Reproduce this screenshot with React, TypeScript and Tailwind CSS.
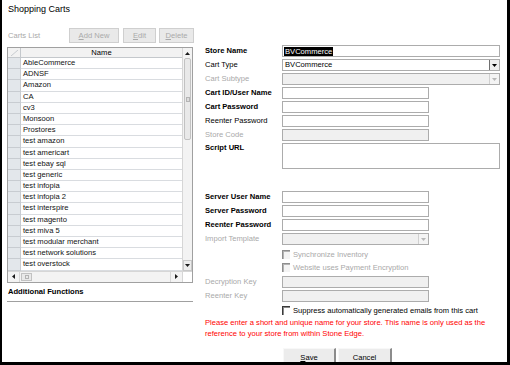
import React from 'react';

const carts = [
  'AbleCommerce',
  'ADNSF',
  'Amazon',
  'CA',
  'cv3',
  'Monsoon',
  'Prostores',
  'test amazon',
  'test americart',
  'test ebay sql',
  'test generic',
  'test infopia',
  'test infopia 2',
  'test interspire',
  'test magento',
  'test miva 5',
  'test modular merchant',
  'test network solutions',
  'test overstock',
];

const Label = ({ text, bold, disabled }: { text: string; bold?: boolean; disabled?: boolean }) => (
  <div
    className={`w-[77px] shrink-0 leading-[12px] ${bold ? 'font-bold' : ''} ${disabled ? 'text-[#a9a9a9]' : 'text-black'}`}
  >
    {text}
  </div>
);

const Input = ({ wide, disabled }: { wide?: boolean; disabled?: boolean }) => (
  <div
    className={`h-[12px] border border-[#acacac] ${wide ? 'w-[218px]' : 'w-[147px]'} ${disabled ? 'bg-[#f0f0f0]' : 'bg-white'}`}
  />
);

const Select = ({ wide, disabled, value }: { wide?: boolean; disabled?: boolean; value?: string }) => (
  <div
    className={`h-[12px] border border-[#acacac] flex items-stretch ${wide ? 'w-[218px]' : 'w-[147px]'} ${disabled ? 'bg-[#f0f0f0]' : 'bg-white'}`}
  >
    <div className="flex-1 pl-[2px] leading-[10px] text-black">{value}</div>
    <div
      className={`w-[10px] flex items-center justify-center border-l ${disabled ? 'border-[#d0d0d0] bg-[#f4f4f4]' : 'border-[#707070] bg-[#eeeeee]'}`}
    >
      <svg width="5" height="3" viewBox="0 0 5 3">
        <path d="M0 0h5L2.5 3z" fill={disabled ? '#b8b8b8' : '#000'} />
      </svg>
    </div>
  </div>
);

const Check = ({ text, disabled }: { text: string; disabled?: boolean }) => (
  <div className="h-[13px] flex items-center pl-[77px]">
    <div
      className={`w-[8px] h-[9px] border-t border-l ${disabled ? 'border-[#8e8e8e] bg-[#f4f4f4]' : 'border-[#3a3a3a] bg-white'}`}
    >
      <div
        className={`w-full h-full border-t border-l ${disabled ? 'border-[#b4b4b4]' : 'border-[#8a8a8a]'}`}
      />
    </div>
    <span className={`ml-[3px] leading-[12px] ${disabled ? 'text-[#a9a9a9]' : 'text-black'}`}>{text}</span>
  </div>
);

const ToolButton = ({ width, first, rest }: { width: string; first: string; rest: string }) => (
  <div
    className={`${width} h-[15px] bg-[#e9e9e9] border border-[#cfcfcf] flex items-center justify-center text-[#a9a9a9]`}
  >
    <span>
      <span className="underline">{first}</span>
      {rest}
    </span>
  </div>
);

const Arrow = ({ dir }: { dir: 'up' | 'down' | 'left' | 'right' }) => {
  const d = {
    up: 'M0 3h5L2.5 0z',
    down: 'M0 0h5L2.5 3z',
    left: 'M3 0v5L0 2.5z',
    right: 'M0 0v5L3 2.5z',
  }[dir];
  const vert = dir === 'up' || dir === 'down';
  return (
    <svg width={vert ? 5 : 3} height={vert ? 3 : 5} viewBox={vert ? '0 0 5 3' : '0 0 3 5'}>
      <path d={d} fill="#1a1a1a" />
    </svg>
  );
};

export default function App() {
  return (
    <div className="w-[510px] h-[365px] overflow-hidden bg-white border-l-2 border-r-[3px] border-b-[3px] border-black font-['Liberation_Sans',Arial,sans-serif] text-[7.6px] text-[#1a1a1a]">
      <div className="h-[20px] pl-[6px] pt-[2px] text-[9px] leading-[14px] text-black">Shopping Carts</div>

      <div className="flex pl-[5px]">
        {/* left: carts list */}
        <div className="w-[187px] shrink-0 flex flex-col">
          <div className="mt-[8px] h-[15px] flex items-center">
            <div className="w-[62px] pl-[1px] text-[#a9a9a9]">Carts List</div>
            <ToolButton width="w-[50px]" first="A" rest="dd New" />
            <div className="w-[4px]" />
            <ToolButton width="w-[33px]" first="E" rest="dit" />
            <div className="w-[3px]" />
            <ToolButton width="w-[35px]" first="D" rest="elete" />
          </div>

          <div className="mt-[4px] w-[186px] border border-[#a0a0a0] flex flex-col">
            <div className="flex h-[222.8px]">
              <div className="w-[174px] flex flex-col">
                <div className="h-[10px] flex border-b border-[#c4c8cc] bg-[#f2f2f2]">
                  <div className="w-[13px] border-r border-[#c4c8cc] relative">
                    <svg className="absolute left-[3px] top-[2px]" width="7" height="6" viewBox="0 0 7 6">
                      <path d="M0 6L7 0" stroke="#c8ccd0" strokeWidth="1" />
                    </svg>
                  </div>
                  <div className="flex-1 text-center leading-[9px] text-black">Name</div>
                </div>
                {carts.map((c) => (
                  <div key={c} className="h-[11.2px] flex">
                    <div className="w-[13px] bg-[#e3e7eb] border-b border-r border-[#c8ccd1]" />
                    <div className="flex-1 pl-[2px] border-b border-[#d9dce0] leading-[10px] whitespace-nowrap overflow-hidden text-[#111]">
                      {c}
                    </div>
                  </div>
                ))}
              </div>
              <div className="w-[10px] flex flex-col bg-[#f3f3f3] border-l border-[#d6d6d6]">
                <div className="h-[10px] flex items-center justify-center">
                  <Arrow dir="up" />
                </div>
                <div className="h-[82px] mx-[1px] border border-[#c2c2c2] rounded-[2px] bg-[#e9e9e9] flex items-center justify-center">
                  <div className="w-[4px] h-[5px] border border-[#b4b4b4] bg-[#dcdcdc]" />
                </div>
                <div className="mt-auto h-[11px] flex items-center justify-center border border-[#c8c8c8] bg-[#ececec]">
                  <Arrow dir="down" />
                </div>
              </div>
            </div>
            <div className="flex h-[11px] bg-[#f3f3f3] border-t border-[#d6d6d6]">
              <div className="w-[12px] flex items-center justify-center border-r border-[#d6d6d6]">
                <Arrow dir="left" />
              </div>
              <div className="w-[11px] my-[1px] ml-[1px] border border-[#c2c2c2] bg-[#e9e9e9] flex items-center justify-center">
                <div className="w-[4px] h-[4px] border border-[#b4b4b4]" />
              </div>
              <div className="flex-1" />
              <div className="w-[12px] flex items-center justify-center border-l border-[#d6d6d6]">
                <Arrow dir="right" />
              </div>
              <div className="w-[10px] bg-white border-l border-[#d6d6d6]" />
            </div>
          </div>

          <div className="mt-[3px] pl-[1px] pb-[3px] leading-[12px] font-bold text-black border-b border-[#a0a0a0] w-[186px]">
            Additional Functions
          </div>
        </div>

        {/* right: form */}
        <div className="ml-[11px] flex flex-col pt-[24px] w-[295px]">
          <div className="h-[14px] flex items-center">
            <Label text="Store Name" bold />
            <div className="h-[12px] w-[218px] border border-[#acacac] bg-white flex items-center pl-[1px]">
              <span className="bg-black text-white leading-[9px] px-[1px]">BVCommerce</span>
            </div>
          </div>
          <div className="h-[14px] flex items-center">
            <Label text="Cart Type" />
            <Select wide value="BVCommerce" />
          </div>
          <div className="h-[14px] flex items-center">
            <Label text="Cart Subtype" disabled />
            <Select wide disabled />
          </div>
          <div className="h-[14px] flex items-center">
            <Label text="Cart ID/User Name" bold />
            <Input />
          </div>
          <div className="h-[14px] flex items-center">
            <Label text="Cart Password" bold />
            <Input />
          </div>
          <div className="h-[14px] flex items-center">
            <Label text="Reenter Password" />
            <Input />
          </div>
          <div className="h-[14px] flex items-center">
            <Label text="Store Code" disabled />
            <Input disabled />
          </div>
          <div className="h-[29px] flex items-start">
            <Label text="Script URL" bold />
            <div className="mt-[1px] h-[26px] w-[218px] border border-[#acacac] bg-white" />
          </div>

          <div className="mt-[19px] h-[14px] flex items-center">
            <Label text="Server User Name" bold />
            <Input />
          </div>
          <div className="h-[14px] flex items-center">
            <Label text="Server Password" bold />
            <Input />
          </div>
          <div className="h-[14px] flex items-center">
            <Label text="Reenter Password" bold />
            <Input />
          </div>
          <div className="h-[14px] flex items-center">
            <Label text="Import Template" disabled />
            <Select disabled />
          </div>

          <div className="mt-[2px]">
            <Check text="Synchronize Inventory" disabled />
            <Check text="Website uses Payment Encryption" disabled />
          </div>

          <div className="mt-[1px] h-[14px] flex items-center">
            <Label text="Decryption Key" disabled />
            <Input disabled />
          </div>
          <div className="h-[14px] flex items-center">
            <Label text="Reenter Key" disabled />
            <Input disabled />
          </div>

          <div className="mt-[1px]">
            <Check text="Suppress automatically generated emails from this cart" />
          </div>

          <div className="leading-[11px] text-[#ff0000]">
            Please enter a short and unique name for your store. This name is only used as the
            <br />
            reference to your store from within Stone Edge.
          </div>

          <div className="mt-[9px] flex pl-[78px] gap-[2px]">
            <div className="w-[53px] h-[18px] bg-[#ececec] border-t border-l border-[#f8f8f8] border-r-2 border-r-[#8c8c8c] flex items-center justify-center text-black">
              <span>
                <span className="underline">S</span>ave
              </span>
            </div>
            <div className="w-[54px] h-[18px] bg-[#ececec] border-t border-l border-[#f8f8f8] border-r-2 border-r-[#8c8c8c] flex items-center justify-center text-black">
              Cancel
            </div>
          </div>
        </div>
      </div>
    </div>
  );
}
